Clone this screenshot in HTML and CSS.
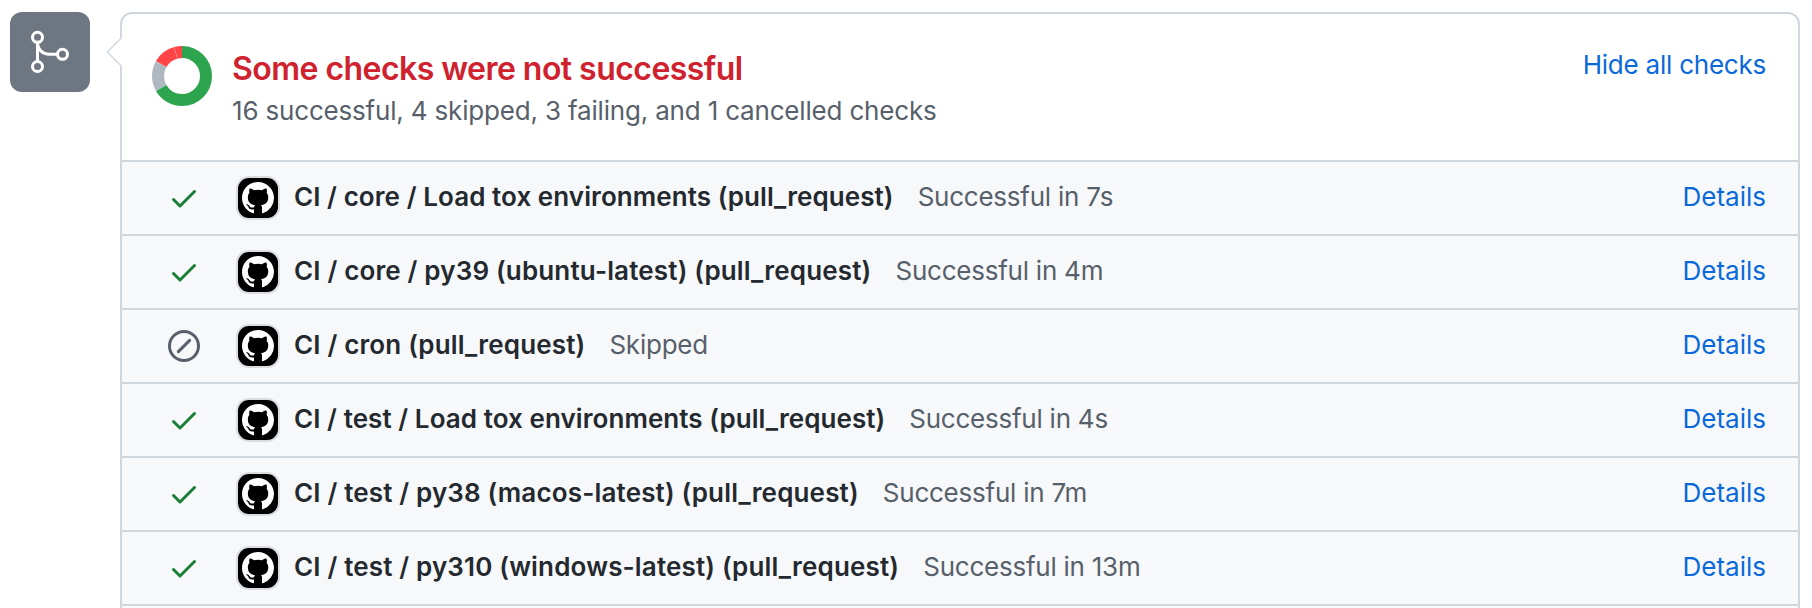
FILE: index.html
```html
<!DOCTYPE html>
<html lang="en">
<head>
<meta charset="utf-8">
<title>Checks</title>
<link rel="stylesheet" href="styles.css">
</head>
<body>
<svg class="sprite" aria-hidden="true">
  <symbol id="check" viewBox="0 0 16 16"><path d="M13.78 4.22a.75.75 0 0 1 0 1.06l-7.25 7.25a.75.75 0 0 1-1.06 0L2.22 9.28a.75.75 0 0 1 1.06-1.06L6 10.94l6.72-6.72a.75.75 0 0 1 1.06 0z"/></symbol>
  <symbol id="skip" viewBox="0 0 16 16"><circle cx="8" cy="8" r="7.25" fill="none" stroke="currentColor" stroke-width="1.5"/><path d="M5.2 10.8l5.6-5.6" fill="none" stroke="currentColor" stroke-width="1.5" stroke-linecap="round"/></symbol>
  <symbol id="mark" viewBox="0 0 16 16"><path d="M8 0C3.58 0 0 3.58 0 8c0 3.54 2.29 6.53 5.47 7.59.4.07.55-.17.55-.38 0-.19-.01-.82-.01-1.49-2.01.37-2.53-.49-2.69-.94-.09-.23-.48-.94-.82-1.13-.28-.15-.68-.52-.01-.53.63-.01 1.08.58 1.23.82.72 1.21 1.87.87 2.33.66.07-.52.28-.87.51-1.07-1.78-.2-3.64-.89-3.64-3.95 0-.87.31-1.59.82-2.15-.08-.2-.36-1.02.08-2.12 0 0 .67-.21 2.2.82.64-.18 1.32-.27 2-.27s1.36.09 2 .27c1.53-1.04 2.2-.82 2.2-.82.44 1.1.16 1.92.08 2.12.51.56.82 1.27.82 2.15 0 3.07-1.87 3.75-3.65 3.95.29.25.54.73.54 1.48 0 1.07-.01 1.93-.01 2.2 0 .21.15.46.55.38A8.01 8.01 0 0 0 16 8c0-4.42-3.58-8-8-8z"/></symbol>
</svg>
<main class="timeline">
  <div class="badge">
    <svg viewBox="0 0 80 80" fill="none" stroke="#fff" stroke-width="3">
      <circle cx="27.5" cy="25.3" r="5"/><circle cx="27.5" cy="54.5" r="5"/><circle cx="52.5" cy="42.3" r="5"/>
      <path d="M27.5 30.3v19.2M27.5 30.3c0 7 5 12 12 12h8"/>
    </svg>
  </div>
  <section class="card">
    <svg class="caret" viewBox="0 0 16 30"><path d="M16 0v30L1.3 15z" fill="#fff"/><path d="M15.5 .7L1.3 15l14.2 14.3" fill="none" stroke="#d0d7de" stroke-width="1.4"/></svg>
    <header class="summary">
      <svg class="donut" viewBox="0 0 60 60" fill="none" stroke-width="12">
        <g transform="rotate(-90 30 30)">
          <circle cx="30" cy="30" r="24" pathLength="24" stroke="#2da44e" stroke-dasharray="16 8"/>
          <circle cx="30" cy="30" r="24" pathLength="24" stroke="#afb8c1" stroke-dasharray="4 20" stroke-dashoffset="-16"/>
          <circle cx="30" cy="30" r="24" pathLength="24" stroke="#ff4548" stroke-dasharray="2.97 21.03" stroke-dashoffset="-20"/>
          <circle cx="30" cy="30" r="24" pathLength="24" stroke="#ff4548" stroke-dasharray="1 23" stroke-dashoffset="-23"/>
        </g>
      </svg>
      <div class="summary-text">
        <h1 class="heading">Some checks were not successful</h1>
        <p class="counts">16 successful, 4 skipped, 3 failing, and 1 cancelled checks</p>
      </div>
      <a class="link toggle">Hide all checks</a>
    </header>
    <ul class="checks">
      <li class="check"><svg class="state success"><use href="#check"/></svg><span class="avatar"><svg><use href="#mark"/></svg></span><strong class="name name-load">CI / core / Load tox environments (pull_request)</strong><span class="status">Successful in 7s</span><a class="link">Details</a></li>
      <li class="check"><svg class="state success"><use href="#check"/></svg><span class="avatar"><svg><use href="#mark"/></svg></span><strong class="name">CI / core / py39 (ubuntu-latest) (pull_request)</strong><span class="status">Successful in 4m</span><a class="link">Details</a></li>
      <li class="check"><svg class="state skipped"><use href="#skip"/></svg><span class="avatar"><svg><use href="#mark"/></svg></span><strong class="name">CI / cron (pull_request)</strong><span class="status">Skipped</span><a class="link">Details</a></li>
      <li class="check"><svg class="state success"><use href="#check"/></svg><span class="avatar"><svg><use href="#mark"/></svg></span><strong class="name name-load">CI / test / Load tox environments (pull_request)</strong><span class="status">Successful in 4s</span><a class="link">Details</a></li>
      <li class="check"><svg class="state success"><use href="#check"/></svg><span class="avatar"><svg><use href="#mark"/></svg></span><strong class="name">CI / test / py38 (macos-latest) (pull_request)</strong><span class="status">Successful in 7m</span><a class="link">Details</a></li>
      <li class="check"><svg class="state success"><use href="#check"/></svg><span class="avatar"><svg><use href="#mark"/></svg></span><strong class="name">CI / test / py310 (windows-latest) (pull_request)</strong><span class="status">Successful in 13m</span><a class="link">Details</a></li>
      <li class="check check-cut"></li>
    </ul>
  </section>
</main>
</body>
</html>
```
FILE: styles.css
```css
* { box-sizing: border-box; }
body {
  margin: 0;
  background: #fff;
  color: #24292f;
  font: 26px/40px Inter, "Liberation Sans", sans-serif;
}
.sprite { display: none; }
svg { display: block; fill: currentColor; }
.timeline { display: flex; align-items: flex-start; gap: 30px; height: 608px; padding: 12px 12px 0 10px; }
.badge { flex: none; width: 80px; height: 80px; border-radius: 12px; background: #6e7781; }
.badge svg { fill: none; }
.card { position: relative; flex: 1; border: 2px solid #d0d7de; border-bottom: 0; border-radius: 12px 12px 0 0; }
.caret { position: absolute; left: -16px; top: 23px; width: 16px; height: 30px; }
.summary { display: flex; align-items: flex-start; height: 146px; padding: 32px 32px 0 30px; }
.donut { flex: none; width: 60px; height: 60px; fill: none; }
.summary-text { margin-left: 20px; }
.heading { margin: 1px 0 0; font-size: 32px; line-height: 44px; font-weight: 600; color: #cf222e; letter-spacing: -0.54px; white-space: nowrap; }
.counts { margin: 0; color: #57606a; letter-spacing: -0.18px; white-space: nowrap; }
.link { margin-left: auto; color: #0969da; white-space: nowrap; }
.toggle { margin-top: -1px; letter-spacing: -0.23px; }
.checks { margin: 0; padding: 0; list-style: none; }
.check { display: flex; align-items: center; height: 74px; padding: 0 32px 0 46px; border-top: 2px solid #d0d7de; background: #f6f8fa; }
.check-cut { height: 4px; }
.state { flex: none; width: 32px; height: 32px; }
.success { color: #1a7f37; }
.skipped { color: #57606a; }
.avatar { display: flex; align-items: center; justify-content: center; flex: none; width: 40px; height: 40px; margin: 0 16px 0 38px; border-radius: 11px; background: #000; color: #fff; box-shadow: 0 0 0 2px #d9dce0; }
.avatar svg { width: 32px; height: 32px; }
.name { font-weight: 600; letter-spacing: 0.165px; white-space: nowrap; }
.name-load { letter-spacing: 0.07px; }
.status { margin-left: 24px; color: #57606a; letter-spacing: -0.24px; white-space: nowrap; }
.check .name, .check .status, .check .link { padding-bottom: 2px; }
```
